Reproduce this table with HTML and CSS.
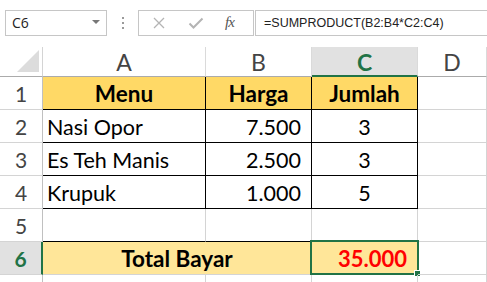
FILE: index.html
```html
<!DOCTYPE html>
<html>
<head>
<meta charset="utf-8">
<link rel="stylesheet" href="styles.css">
</head>
<body>
<div class="toolbar">
  <div class="namebox">
    <span class="name">C6</span>
    <span class="caret"></span>
  </div>
  <div class="grip"><i></i><i></i><i></i></div>
  <div class="fxbox">
    <svg class="ico" width="14" height="12" viewBox="0 0 14 12"><path d="M2 1 L12 11 M12 1 L2 11" stroke="#b4b4b4" stroke-width="1.3" fill="none"/></svg>
    <svg class="ico" width="16" height="12" viewBox="0 0 16 12"><path d="M1.5 6.5 L5.5 10.5 L14.5 1.5" stroke="#b4b4b4" stroke-width="2" fill="none"/></svg>
    <span class="fx">fx</span>
  </div>
  <div class="formula">=SUMPRODUCT(B2:B4*C2:C4)</div>
</div>
<div class="sheet">
  <div class="corner"><svg width="23" height="23" viewBox="0 0 23 23"><path d="M0 22 L22 22 L22 0 Z" fill="#dcdcdc"/></svg></div>
  <div class="colh">A</div>
  <div class="colh">B</div>
  <div class="colh active-col">C</div>
  <div class="colh last">D</div>

  <div class="rowh">1</div>
  <div class="cell head bl">Menu</div>
  <div class="cell head bl">Harga</div>
  <div class="cell head bl">Jumlah</div>
  <div class="cell last"></div>

  <div class="rowh">2</div>
  <div class="cell bl left">Nasi Opor</div>
  <div class="cell bl right">7.500</div>
  <div class="cell bl center">3</div>
  <div class="cell last"></div>

  <div class="rowh">3</div>
  <div class="cell bl left">Es Teh Manis</div>
  <div class="cell bl right">2.500</div>
  <div class="cell bl center">3</div>
  <div class="cell last"></div>

  <div class="rowh">4</div>
  <div class="cell bl left">Krupuk</div>
  <div class="cell bl right">1.000</div>
  <div class="cell bl center">5</div>
  <div class="cell last"></div>

  <div class="rowh">5</div>
  <div class="cell bb"></div>
  <div class="cell bb"></div>
  <div class="cell"></div>
  <div class="cell last"></div>

  <div class="rowh active-row">6</div>
  <div class="cell total span2">Total Bayar</div>
  <div class="cell sel right red">35.000<span class="selbox"><span class="handle"></span></span></div>
  <div class="cell last"></div>

  <div class="rowh"></div>
  <div class="cell"></div>
  <div class="cell"></div>
  <div class="cell"></div>
  <div class="cell last"></div>
</div>
</body>
</html>
```
FILE: styles.css
```css
html, body {
  margin: 0;
  padding: 0;
  background: #fff;
  overflow: hidden;
}
body {
  width: 487px;
  height: 282px;
  font-family: "Lato", "Liberation Sans", sans-serif;
}
.toolbar {
  height: 47px;
  display: flex;
  align-items: flex-start;
  padding-top: 10px;
  box-sizing: border-box;
  padding-left: 5px;
}
.namebox {
  width: 102px;
  height: 26px;
  box-sizing: border-box;
  border: 1px solid #c6c6c6;
  display: flex;
  align-items: center;
  justify-content: space-between;
  padding: 0 6px 0 6px;
}
.name {
  font-family: "Open Sans", sans-serif;
  font-size: 14px;
  color: #222;
  margin-top: -1px;
}
.caret {
  width: 0;
  height: 0;
  border-left: 4px solid transparent;
  border-right: 4px solid transparent;
  border-top: 4px solid #777;
  margin-top: -3px;
}
.grip {
  width: 31px;
  height: 26px;
  display: flex;
  flex-direction: column;
  align-items: center;
  justify-content: center;
  gap: 3px;
}
.grip i {
  display: block;
  width: 2px;
  height: 2px;
  background: #9a9a9a;
}
.fxbox {
  width: 116px;
  height: 26px;
  box-sizing: border-box;
  border: 1px solid #c6c6c6;
  display: flex;
  align-items: center;
  padding-left: 13px;
}
.fxbox .ico:nth-child(1) { margin-right: 22px; }
.fxbox .ico:nth-child(2) { margin-right: 21px; }
.fx {
  font-family: "Liberation Serif", serif;
  font-style: italic;
  font-size: 15px;
  color: #555;
  letter-spacing: -1px;
  margin-top: -2px;
}
.formula {
  margin-left: 1px;
  flex: 1;
  height: 26px;
  box-sizing: border-box;
  border: 1px solid #c6c6c6;
  border-right: none;
  padding-left: 8px;
  font-family: "Liberation Sans", sans-serif;
  font-size: 12.5px;
  line-height: 24px;
  color: #222;
  white-space: nowrap;
}
.sheet {
  display: grid;
  grid-template-columns: 43px 163px 106px 106px 1fr;
  grid-template-rows: 30px repeat(6, 33px) 33px;
}
.sheet > div {
  box-sizing: border-box;
  border-right: 1px solid #d4d4d4;
  border-bottom: 1px solid #d4d4d4;
  position: relative;
}
.corner {
  border-bottom-color: #ababab !important;
  border-right-color: #d4d4d4 !important;
  display: flex;
  align-items: flex-end;
  justify-content: flex-end;
  padding: 0 2px 3px 0;
}
.corner svg { display: block; }
.colh {
  border-bottom-color: #ababab !important;
  border-right-color: #dadada !important;
  text-align: center;
  font-size: 23px;
  line-height: 31px;
  color: #444;
}
.colh.active-col {
  background: #e1e1e1;
  color: #217346;
  font-weight: bold;
  border-bottom: 2px solid #217346 !important;
}
.rowh {
  border-right-color: #c0c0c0 !important;
  border-bottom-color: #d4d4d4;
  text-align: center;
  font-size: 21px;
  line-height: 34px;
  color: #444;
}
.rowh.active-row {
  background: #e1e1e1;
  color: #217346;
  font-weight: bold;
  border-right: 2px solid #217346 !important;
}
.cell {
  font-size: 21.5px;
  line-height: 34px;
  color: #000;
  white-space: nowrap;
}
.cell.left { padding-left: 4px; }
.cell.right { text-align: right; padding-right: 10px; }
.cell.center { text-align: center; }
.cell.head {
  background: #ffd966;
  font-weight: bold;
  font-size: 22.5px;
  text-align: center;
}
.sheet > .bl {
  border-right-color: #000;
  border-bottom-color: #000;
}
.sheet > .bb {
  border-bottom-color: #000;
}
.cell.total {
  grid-column: span 2;
  background: #ffe699;
  font-weight: bold;
  font-size: 22.5px;
  text-align: center;
}
.cell.sel {
  background: #ffe699;
  font-weight: bold;
  font-size: 22px;
}
.cell.red { color: #ff0000; }
.selbox {
  position: absolute;
  left: -2px;
  top: -2px;
  width: 109px;
  height: 35px;
  box-sizing: border-box;
  border: 2px solid #217346;
}
.handle {
  position: absolute;
  right: -4px;
  bottom: -4px;
  width: 5px;
  height: 5px;
  background: #217346;
  border: 1px solid #fff;
}
```
